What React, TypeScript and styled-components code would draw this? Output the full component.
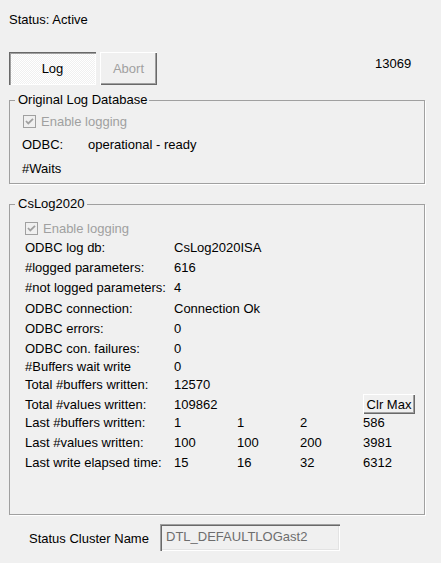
import React from "react";
import styled, { createGlobalStyle } from "styled-components";

const Global = createGlobalStyle`
  html, body { margin: 0; padding: 0; background: #f0f0f0; }
  body {
    font-family: "Liberation Sans", Arial, sans-serif;
    font-size: 13px;
    color: #000;
  }
`;

const Window = styled.div`
  width: 441px;
  height: 563px;
  box-sizing: border-box;
  display: flex;
  flex-direction: column;
  overflow: hidden;
  background: #f0f0f0;
`;

const StatusLine = styled.div`
  margin: 12px 0 0 9px;
  height: 16px;
  line-height: 16px;
`;

const TopBar = styled.div`
  display: flex;
  align-items: flex-start;
  gap: 4px;
  margin: 24px 0 0 9px;
  height: 33px;
`;

const PushButton = styled.button<{ $w: number; $h: number; $pressed?: boolean }>`
  width: ${(p) => p.$w}px;
  height: ${(p) => p.$h}px;
  box-sizing: border-box;
  padding: 0;
  border: none;
  font-family: inherit;
  font-size: 13px;
  color: #000;
  background: ${(p) =>
    p.$pressed
      ? "repeating-conic-gradient(#ffffff 0 25%, #f0f0f0 0 50%) 0 0 / 2px 2px"
      : "#f0f0f0"};
  box-shadow: ${(p) =>
    p.$pressed
      ? "inset 1px 1px 0 #696969, inset 2px 2px 0 #a0a0a0, inset -1px -1px 0 #ffffff"
      : "inset 1px 1px 0 #ffffff, inset -1px -1px 0 #696969, inset -2px -2px 0 #a0a0a0"};
  &:disabled {
    color: #a0a0a0;
  }
`;

const Counter = styled.div`
  margin: 4px 0 0 214px;
  line-height: 16px;
`;

const Group = styled.fieldset<{ $top: number; $pb: number }>`
  margin: ${(p) => p.$top}px 0 0 9px;
  width: 416px;
  min-width: 0;
  box-sizing: border-box;
  border: 1px solid #a0a0a0;
  padding: 0 0 ${(p) => p.$pb}px 0;
  box-shadow: 1px 1px 0 #ffffff;
`;

const Legend = styled.legend`
  margin-left: 5px;
  padding: 0 2px 0 3px;
  line-height: 16px;
  height: 16px;
`;

const GroupBody = styled.div<{ $pl: number; $pt: number }>`
  display: flex;
  flex-direction: column;
  padding: ${(p) => p.$pt}px 0 0 ${(p) => p.$pl}px;
`;

const CheckRow = styled.label<{ $indent?: number }>`
  display: flex;
  align-items: center;
  gap: 5px;
  height: 20px;
  margin-left: ${(p) => p.$indent ?? 0}px;
  color: #a0a0a0;
`;

const Pair = styled.div<{ $mt: number }>`
  display: flex;
  align-items: center;
  height: 20px;
  margin-top: ${(p) => p.$mt}px;
  white-space: nowrap;
`;

const PairLabel = styled.span`
  width: 66px;
`;

const DataRow = styled.div<{ $h: number }>`
  display: grid;
  grid-template-columns: 149px 63px 63px 63px auto;
  align-items: center;
  height: ${(p) => p.$h}px;
  white-space: nowrap;
`;

const Cell = styled.span`
  overflow: visible;
`;

const BottomRow = styled.div`
  display: flex;
  align-items: center;
  margin: 9px 0 0 29px;
  height: 27px;
`;

const BottomLabel = styled.span`
  width: 131px;
  padding-top: 2px;
`;

const EditBox = styled.div`
  width: 180px;
  height: 27px;
  box-sizing: border-box;
  padding: 0 0 2px 6px;
  display: flex;
  align-items: center;
  color: #6d6d6d;
  background: #f0f0f0;
  box-shadow: inset 1px 1px 0 #a0a0a0, inset 2px 2px 0 #696969,
    inset -1px -1px 0 #ffffff, inset -2px -2px 0 #e3e3e3;
`;

const CheckBox = () => (
  <svg width="13" height="13" viewBox="0 0 13 13">
    <rect x="0.5" y="0.5" width="12" height="12" fill="#f0f0f0" stroke="#a0a0a0" />
    <path d="M3 6 L5.3 8.5 L10 3.8" fill="none" stroke="#a0a0a0" strokeWidth="1.8" />
  </svg>
);

type Row = { h: number; cells: string[]; clr?: boolean };

const rows: Row[] = [
  { h: 19, cells: ["ODBC log db:", "CsLog2020ISA"] },
  { h: 20, cells: ["#logged parameters:", "616"] },
  { h: 21, cells: ["#not logged parameters:", "4"] },
  { h: 20, cells: ["ODBC connection:", "Connection Ok"] },
  { h: 20, cells: ["ODBC errors:", "0"] },
  { h: 20, cells: ["ODBC con. failures:", "0"] },
  { h: 17, cells: ["#Buffers wait write", "0"] },
  { h: 19, cells: ["Total #buffers written:", "12570"] },
  { h: 18, cells: ["Total #values written:", "109862", "", ""], clr: true },
  { h: 20, cells: ["Last #buffers written:", "1", "1", "2", "586"] },
  { h: 20, cells: ["Last #values written:", "100", "100", "200", "3981"] },
  { h: 20, cells: ["Last write elapsed time:", "15", "16", "32", "6312"] },
];

export default function App() {
  return (
    <Window>
      <Global />
      <StatusLine>Status: Active</StatusLine>
      <TopBar>
        <PushButton $w={87} $h={33} $pressed>
          Log
        </PushButton>
        <PushButton $w={57} $h={33} disabled>
          Abort
        </PushButton>
        <Counter>13069</Counter>
      </TopBar>

      <Group $top={7} $pb={5}>
        <Legend>Original Log Database</Legend>
        <GroupBody $pl={12} $pt={3}>
          <CheckRow $indent={1}>
            <CheckBox />
            Enable logging
          </CheckRow>
          <Pair $mt={3}>
            <PairLabel>ODBC:</PairLabel>
            <span>operational - ready</span>
          </Pair>
          <Pair $mt={4}>#Waits</Pair>
        </GroupBody>
      </Group>

      <Group $top={12} $pb={42}>
        <Legend>CsLog2020</Legend>
        <GroupBody $pl={15} $pt={6}>
          <CheckRow>
            <CheckBox />
            Enable logging
          </CheckRow>
          {rows.map((r) => (
            <DataRow key={r.cells[0]} $h={r.h}>
              {r.cells.map((c, i) => (
                <Cell key={i}>{c}</Cell>
              ))}
              {r.clr && (
                <PushButton $w={52} $h={20}>
                  Clr Max
                </PushButton>
              )}
            </DataRow>
          ))}
        </GroupBody>
      </Group>

      <BottomRow>
        <BottomLabel>Status Cluster Name</BottomLabel>
        <EditBox>DTL_DEFAULTLOGast2</EditBox>
      </BottomRow>
    </Window>
  );
}
